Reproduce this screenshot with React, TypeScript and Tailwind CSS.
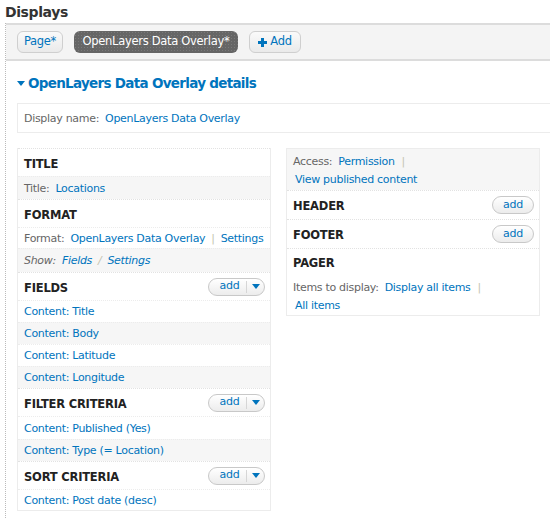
import React from "react";

type Row = { label?: string; links: { text: string; sep?: string }[]; gray?: boolean; italic?: boolean; h: string };

function AddButton({ dropdown }: { dropdown?: boolean }) {
  if (!dropdown) {
    return (
      <span className="flex h-[18px] w-[42px] items-center justify-center rounded-full border border-[#c8c8c8] bg-gradient-to-b from-white to-[#ececec] text-[11px] text-[#0074bd]">
        add
      </span>
    );
  }
  return (
    <span className="flex h-[18px] w-[57px] items-center rounded-full border border-[#c8c8c8] bg-gradient-to-b from-white to-[#ececec] text-[11px] text-[#0074bd]">
      <span className="flex w-[37px] justify-center pl-[4px]">add</span>
      <span className="h-[12px] w-px bg-[#d6d6d6]" />
      <span className="flex flex-1 justify-center">
        <svg width="8" height="5" viewBox="0 0 8 5">
          <path d="M0 0h8L4 5z" fill="#0074bd" />
        </svg>
      </span>
    </span>
  );
}

function SectionHeader({ title, add, h = "h-[28px]" }: { title: string; add?: "plain" | "dropdown"; h?: string }) {
  return (
    <div className={`flex ${h} items-center justify-between border-t border-dotted border-[#e2e2e2] pl-[6px] pr-[5px]`}>
      <span className="pt-[4px] text-[11.5px] font-bold uppercase tracking-[-0.2px] text-[#222]">{title}</span>
      {add && <AddButton dropdown={add === "dropdown"} />}
    </div>
  );
}

function RowLine({ row }: { row: Row }) {
  return (
    <div
      className={`flex ${row.h} items-center border-t border-dotted border-[#ececec] pl-[6px] pt-[2px] ${row.gray ? "bg-[#f6f6f6]" : "bg-white"} ${row.italic ? "italic" : ""}`}
    >
      {row.label && <span className="mr-[6px] text-[#666]">{row.label}</span>}
      {row.links.map((l) => (
        <React.Fragment key={l.text}>
          <span className="text-[#0074bd]">{l.text}</span>
          {l.sep && <span className="mx-[6px] text-[#c4c4b0]">{l.sep}</span>}
        </React.Fragment>
      ))}
    </div>
  );
}

export default function App() {
  return (
    <div className="h-[518px] w-[550px] overflow-hidden bg-white font-['DejaVu_Sans',sans-serif] text-[11px] tracking-[-0.3px] text-[#666]">
      <h1 className="h-[23px] pl-[5px] text-[14px] font-bold leading-[24px] tracking-[-0.4px] text-[#333]">Displays</h1>

      <div className="ml-[5px] h-[495px] w-[600px] border-l border-dotted border-[#bbb]">
        {/* Tabs */}
        <div className="flex h-[38px] items-start gap-[11px] border-t-2 border-b-2 border-[#dcdcdc] bg-[#f4f4f4] pl-[11px] pt-[6px]">
          <span className="flex h-[22px] w-[46px] items-center justify-center rounded-[6px] border border-[#cfcfcf] bg-gradient-to-b from-[#fafafa] to-[#eaeaea] text-[11.5px] text-[#0074bd]">
            Page*
          </span>
          <span className="flex h-[22px] w-[164px] items-center justify-center rounded-[6px] bg-[#666] bg-[radial-gradient(#7a7a7a_0.6px,transparent_0.6px)] bg-[size:3px_3px] text-[11.5px] text-white">
            OpenLayers Data Overlay*
          </span>
          <span className="flex h-[22px] w-[52px] items-center justify-center gap-[3px] rounded-[6px] border border-[#cfcfcf] bg-gradient-to-b from-[#fafafa] to-[#eaeaea] text-[11.5px] text-[#0074bd]">
            <svg width="9" height="9" viewBox="0 0 9 9">
              <path d="M3 0h3v3h3v3H6v3H3V6H0V3h3z" fill="#0074bd" />
            </svg>
            Add
          </span>
        </div>

        <div className="pl-[11px]">
          <h2 className="mt-[12px] flex h-[20px] items-center text-[13.5px] font-bold tracking-[-0.7px] text-[#0074bd]">
            <svg width="8" height="5" viewBox="0 0 8 5" className="mr-[3px]">
              <path d="M0 0h8L4 5z" fill="#0074bd" />
            </svg>
            OpenLayers Data Overlay details
          </h2>

          <div className="mt-[10px] flex h-[30px] items-center border border-[#ececec] pl-[6px] pt-[2px]">
            <span className="mr-[6px] text-[#666]">Display name:</span>
            <span className="text-[#0074bd]">OpenLayers Data Overlay</span>
          </div>

          <div className="mt-[15px] flex items-start gap-[15px]">
            {/* Left column */}
            <div className="w-[254px] border-x border-b border-[#ececec]">
              <SectionHeader title="Title" />
              <RowLine row={{ label: "Title:", links: [{ text: "Locations" }], gray: true, h: "h-[23px]" }} />
              <SectionHeader title="Format" />
              <RowLine
                row={{
                  label: "Format:",
                  links: [{ text: "OpenLayers Data Overlay", sep: "|" }, { text: "Settings" }],
                  h: "h-[21px]",
                }}
              />
              <RowLine
                row={{
                  label: "Show:",
                  links: [{ text: "Fields", sep: "/" }, { text: "Settings" }],
                  gray: true,
                  italic: true,
                  h: "h-[24px]",
                }}
              />
              <SectionHeader title="Fields" add="dropdown" />
              <RowLine row={{ links: [{ text: "Content: Title" }], h: "h-[22px]" }} />
              <RowLine row={{ links: [{ text: "Content: Body" }], gray: true, h: "h-[22px]" }} />
              <RowLine row={{ links: [{ text: "Content: Latitude" }], h: "h-[22px]" }} />
              <RowLine row={{ links: [{ text: "Content: Longitude" }], gray: true, h: "h-[22px]" }} />
              <SectionHeader title="Filter criteria" add="dropdown" />
              <RowLine row={{ links: [{ text: "Content: Published (Yes)" }], h: "h-[23px]" }} />
              <RowLine row={{ links: [{ text: "Content: Type (= Location)" }], gray: true, h: "h-[22px]" }} />
              <SectionHeader title="Sort criteria" add="dropdown" />
              <RowLine row={{ links: [{ text: "Content: Post date (desc)" }], h: "h-[21px]" }} />
            </div>

            {/* Right column */}
            <div className="w-[254px] border border-[#ececec]">
              <div className="flex h-[41px] flex-col justify-center gap-[5px] bg-[#f6f6f6] pl-[6px] pt-[2px] leading-[13px]">
                <div>
                  <span className="mr-[6px] text-[#666]">Access:</span>
                  <span className="text-[#0074bd]">Permission</span>
                  <span className="ml-[7px] text-[#c4c4b0]">|</span>
                </div>
                <div className="pl-[2px] text-[#0074bd]">View published content</div>
              </div>
              <SectionHeader title="Header" add="plain" h="h-[29px]" />
              <SectionHeader title="Footer" add="plain" h="h-[29px]" />
              <div className="border-t border-dotted border-[#e2e2e2] pb-[1px]">
                <div className="flex h-[29px] items-center pl-[6px] text-[11.5px] font-bold tracking-[-0.2px] text-[#222]">
                  PAGER
                </div>
                <div className="flex h-[20px] items-center pl-[6px]">
                  <span className="mr-[6px] text-[#666]">Items to display:</span>
                  <span className="text-[#0074bd]">Display all items</span>
                  <span className="ml-[7px] text-[#c4c4b0]">|</span>
                </div>
                <div className="flex h-[16px] items-center pl-[8px] text-[#0074bd]">All items</div>
              </div>
            </div>
          </div>
        </div>
      </div>
    </div>
  );
}
